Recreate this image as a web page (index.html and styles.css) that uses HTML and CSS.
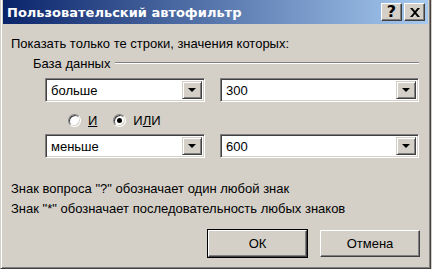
FILE: index.html
```html
<!DOCTYPE html>
<html lang="ru">
<head>
    <meta charset="UTF-8">
    <title>Пользовательский автофильтр</title>
    <link rel="stylesheet" href="styles.css">
</head>
<body>
    <div class="window">
        <div class="titlebar">
            <span class="title">Пользовательский автофильтр</span>
            <div class="title-buttons">
                <button class="tbtn help">?</button>
                <button class="tbtn close">
                    <svg width="10" height="9" viewBox="0 0 10 9"><path d="M0 0h2.5l2.5 3 2.5-3h2.5l-3.8 4.5 3.8 4.5h-2.5l-2.5-3-2.5 3h-2.5l3.8-4.5z" fill="#000"/></svg>
                </button>
            </div>
        </div>

        <div class="content">
            <p class="lead">Показать только те строки, значения которых:</p>

            <div class="group-head">
                <span class="group-label">База данных</span>
                <span class="group-line"></span>
            </div>

            <div class="combo-row">
                <div class="combo op"><span class="combo-text">больше</span><span class="drop"><i></i></span></div>
                <div class="combo val"><span class="combo-text">300</span><span class="drop"><i></i></span></div>
            </div>

            <div class="radio-row">
                <label class="radio"><span class="circle"></span><span class="rlabel"><u>И</u></span></label>
                <label class="radio"><span class="circle checked"></span><span class="rlabel">И<u>Л</u>И</span></label>
            </div>

            <div class="combo-row second">
                <div class="combo op"><span class="combo-text">меньше</span><span class="drop"><i></i></span></div>
                <div class="combo val"><span class="combo-text">600</span><span class="drop"><i></i></span></div>
            </div>

            <div class="hints">
                <p>Знак вопроса "?" обозначает один любой знак</p>
                <p>Знак "*" обозначает последовательность любых знаков</p>
            </div>

            <div class="actions">
                <div class="default-frame"><button class="btn">ОК</button></div>
                <button class="btn">Отмена</button>
            </div>
        </div>
    </div>
</body>
</html>
```

FILE: styles.css
```css
body {
    margin: 0;
    background-color: #d4d0c8;
    font-family: "Liberation Sans", Arial, sans-serif;
    font-size: 13px;
    color: #000;
}
.window {
    width: 431px;
    height: 269px;
    box-sizing: border-box;
    background-color: #d4d0c8;
    border-left: 1px solid #d4d0c8;
    border-right: 1px solid #404040;
    border-bottom: 1px solid #404040;
    box-shadow: inset 1px 0 #fff, inset -1px -1px #808080;
    padding: 0 2px 2px 2px;
    overflow: hidden;
}
.titlebar {
    height: 24px;
    display: flex;
    align-items: center;
    justify-content: space-between;
    background: linear-gradient(to right, #0a246a, #a6caf0);
    padding: 0 3px 0 4px;
}
.title {
    font-family: "DejaVu Sans", sans-serif;
    font-weight: bold;
    font-size: 13px;
    color: #fff;
}
.title-buttons {
    display: flex;
    gap: 2px;
}
.tbtn {
    width: 21px;
    height: 18px;
    padding: 0;
    margin: 0;
    background-color: #d4d0c8;
    border: 1px solid;
    border-color: #fff #404040 #404040 #fff;
    box-shadow: inset -1px -1px #808080;
    display: flex;
    align-items: center;
    justify-content: center;
    font-family: "DejaVu Sans", sans-serif;
    font-weight: bold;
    font-size: 16px;
    line-height: 16px;
    color: #000;
}
.content {
    padding: 0 9px 0 8px;
}
.lead {
    margin: 12px 0 0 0;
    line-height: 16px;
}
.group-head {
    margin-top: 3px;
    height: 16px;
    display: flex;
    align-items: center;
    padding-left: 22px;
}
.group-label {
    margin-right: 5px;
}
.group-line {
    flex: 1;
    height: 0;
    border-top: 1px solid #808080;
    border-bottom: 1px solid #fff;
}
.combo-row {
    margin: 7px 0 0 34px;
    display: flex;
    gap: 15px;
}
.combo-row.second {
    margin-top: 4px;
}
.combo {
    height: 24px;
    box-sizing: border-box;
    background-color: #fff;
    border: 1px solid;
    border-color: #808080 #fff #fff #808080;
    box-shadow: inset 1px 1px #404040, inset -1px -1px #d4d0c8;
    display: flex;
    align-items: center;
    padding: 2px;
}
.combo.op {
    width: 160px;
}
.combo.val {
    width: 199px;
}
.combo-text {
    flex: 1;
    padding-left: 3px;
}
.drop {
    width: 20px;
    height: 18px;
    box-sizing: border-box;
    background-color: #d4d0c8;
    border: 1px solid;
    border-color: #d4d0c8 #404040 #404040 #d4d0c8;
    box-shadow: inset 1px 1px #fff, inset -1px -1px #808080;
    display: flex;
    align-items: center;
    justify-content: center;
}
.drop i {
    width: 0;
    height: 0;
    border-left: 4px solid transparent;
    border-right: 4px solid transparent;
    border-top: 4px solid #000;
}
.radio-row {
    margin: 8px 0 0 57px;
    height: 20px;
    display: flex;
    align-items: center;
    gap: 16px;
}
.radio {
    display: flex;
    align-items: center;
    gap: 7px;
}
.circle {
    width: 13px;
    height: 13px;
    box-sizing: border-box;
    border-radius: 50%;
    background-color: #fff;
    border: 1px solid;
    border-color: #808080 #fff #fff #808080;
    box-shadow: inset 1px 1px #404040, inset -1px -1px #d4d0c8;
    display: flex;
    align-items: center;
    justify-content: center;
}
.circle.checked::after {
    content: "";
    width: 5px;
    height: 5px;
    border-radius: 50%;
    background-color: #000;
}
.hints {
    margin-top: 21px;
}
.hints p {
    margin: 0;
    line-height: 20px;
}
.actions {
    margin-top: 10px;
    display: flex;
    justify-content: flex-end;
    align-items: center;
    gap: 12px;
    margin-right: -1px;
}
.default-frame {
    border: 1px solid #000;
    display: flex;
}
.btn {
    width: 100px;
    height: 27px;
    margin: 0;
    padding: 0;
    background-color: #d4d0c8;
    border: 1px solid;
    border-color: #fff #404040 #404040 #fff;
    box-shadow: inset -1px -1px #808080;
    font-family: "Liberation Sans", Arial, sans-serif;
    font-size: 13px;
    color: #000;
}
.default-frame .btn {
    width: 99px;
}
```
